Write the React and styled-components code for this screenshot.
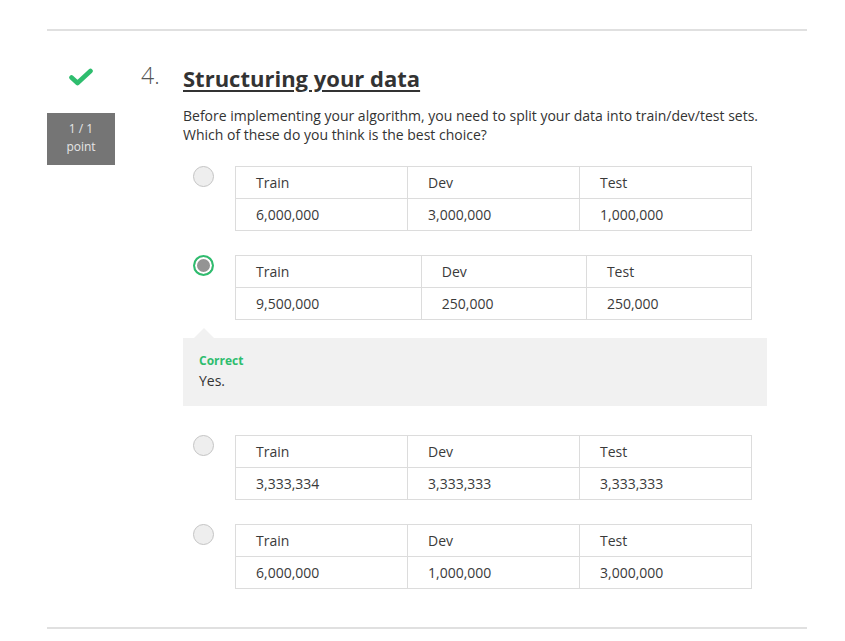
import React from "react";
import styled, { createGlobalStyle } from "styled-components";

const GlobalStyle = createGlobalStyle`
  body {
    margin: 0;
    background: #fff;
    font-family: "Open Sans", "Liberation Sans", sans-serif;
    color: #333;
  }
`;

const options = [
  { values: ["6,000,000", "3,000,000", "1,000,000"] },
  { values: ["9,500,000", "250,000", "250,000"], selected: true, feedback: "Yes." },
  { values: ["3,333,334", "3,333,333", "3,333,333"] },
  { values: ["6,000,000", "1,000,000", "3,000,000"] },
];

const CheckIcon = () => (
  <svg width="24" height="18" viewBox="0 0 24 18">
    <path
      d="M2.5 9.5 L8.5 15 L21.5 3"
      fill="none"
      stroke="#2ebd6e"
      strokeWidth="4.6"
      strokeLinecap="round"
      strokeLinejoin="round"
    />
  </svg>
);

const App = () => {
  return (
    <Page>
      <GlobalStyle />
      <Rule />
      <Question>
        <Side>
          <Check>
            <CheckIcon />
          </Check>
          <Score>
            1 / 1
            <br />
            point
          </Score>
        </Side>
        <Num>4.</Num>
        <Content>
          <Title>Structuring your data</Title>
          <Prompt>
            Before implementing your algorithm, you need to split your data into train/dev/test sets.
            <br />
            Which of these do you think is the best choice?
          </Prompt>
          <Options>
            {options.map((opt, i) => (
              <div key={i}>
                <Option>
                  <Radio selected={opt.selected} />
                  <Table>
                    <tbody>
                      <tr>
                        <Cell>Train</Cell>
                        <Cell>Dev</Cell>
                        <Cell>Test</Cell>
                      </tr>
                      <tr>
                        {opt.values.map((v, j) => (
                          <Cell key={j}>{v}</Cell>
                        ))}
                      </tr>
                    </tbody>
                  </Table>
                </Option>
                {opt.feedback && (
                  <Feedback>
                    <FeedbackLabel>Correct</FeedbackLabel>
                    <FeedbackText>{opt.feedback}</FeedbackText>
                  </Feedback>
                )}
              </div>
            ))}
          </Options>
        </Content>
      </Question>
      <Rule />
    </Page>
  );
};

export default App;

const Page = styled.div`
  width: 760px;
  padding: 29px 0 0 47px;
`;

const Rule = styled.div`
  height: 2px;
  background: #e0e0e0;
`;

const Question = styled.div`
  display: flex;
  padding: 32px 0 38px;
`;

const Side = styled.div`
  width: 68px;
  display: flex;
  flex-direction: column;
  align-items: center;
`;

const Check = styled.div`
  height: 18px;
  margin-top: 5px;
  margin-left: -1px;
`;

const Score = styled.div`
  margin-top: 27px;
  width: 68px;
  height: 52px;
  box-sizing: border-box;
  padding-top: 7px;
  background: #757575;
  color: #e6e6e6;
  font-size: 12px;
  line-height: 18px;
  text-align: center;
`;

const Num = styled.div`
  width: 68px;
  padding-left: 26px;
  box-sizing: border-box;
  font-size: 23px;
  font-weight: 300;
  line-height: 24px;
  color: #555;
`;

const Content = styled.div`
  width: 584px;
`;

const Title = styled.h2`
  margin: 0;
  font-size: 22px;
  font-weight: 700;
  line-height: 30px;
  color: #333;
  text-decoration: underline;
  text-decoration-thickness: 2px;
  text-underline-offset: 3px;
`;

const Prompt = styled.p`
  margin: 13px 0 0;
  font-size: 14px;
  line-height: 19px;
  color: #333;
`;

const Options = styled.div`
  margin-top: 22px;
  display: flex;
  flex-direction: column;
  gap: 24px;
`;

const Option = styled.div`
  display: flex;
  align-items: flex-start;
  padding-left: 10px;
`;

const Radio = styled.span`
  width: 21px;
  height: 21px;
  box-sizing: border-box;
  border-radius: 50%;
  margin-right: 21px;
  flex-shrink: 0;
  border: ${(p) => (p.selected ? "2px solid #2ebd6e" : "1px solid #c4c4c4")};
  background: ${(p) => (p.selected ? "#949494" : "#eeeeee")};
  box-shadow: ${(p) => (p.selected ? "inset 0 0 0 2px #fff" : "none")};
`;

const Table = styled.table`
  width: 517px;
  border-collapse: collapse;
`;

const Cell = styled.td`
  height: 32px;
  box-sizing: border-box;
  padding: 0 20px;
  border: 1px solid #dcdcdc;
  font-size: 14px;
  color: #3a3a3a;
`;

const Feedback = styled.div`
  position: relative;
  margin-top: 18px;
  margin-bottom: 5px;
  background: #f1f1f1;
  padding: 15px 16px 15px;

  &::before {
    content: "";
    position: absolute;
    top: -10px;
    left: 11px;
    border-left: 10px solid transparent;
    border-right: 10px solid transparent;
    border-bottom: 10px solid #f1f1f1;
  }
`;

const FeedbackLabel = styled.div`
  font-size: 12px;
  font-weight: 700;
  line-height: 16px;
  color: #2ebd6e;
`;

const FeedbackText = styled.div`
  margin-top: 2px;
  font-size: 14px;
  line-height: 20px;
  color: #333;
`;
